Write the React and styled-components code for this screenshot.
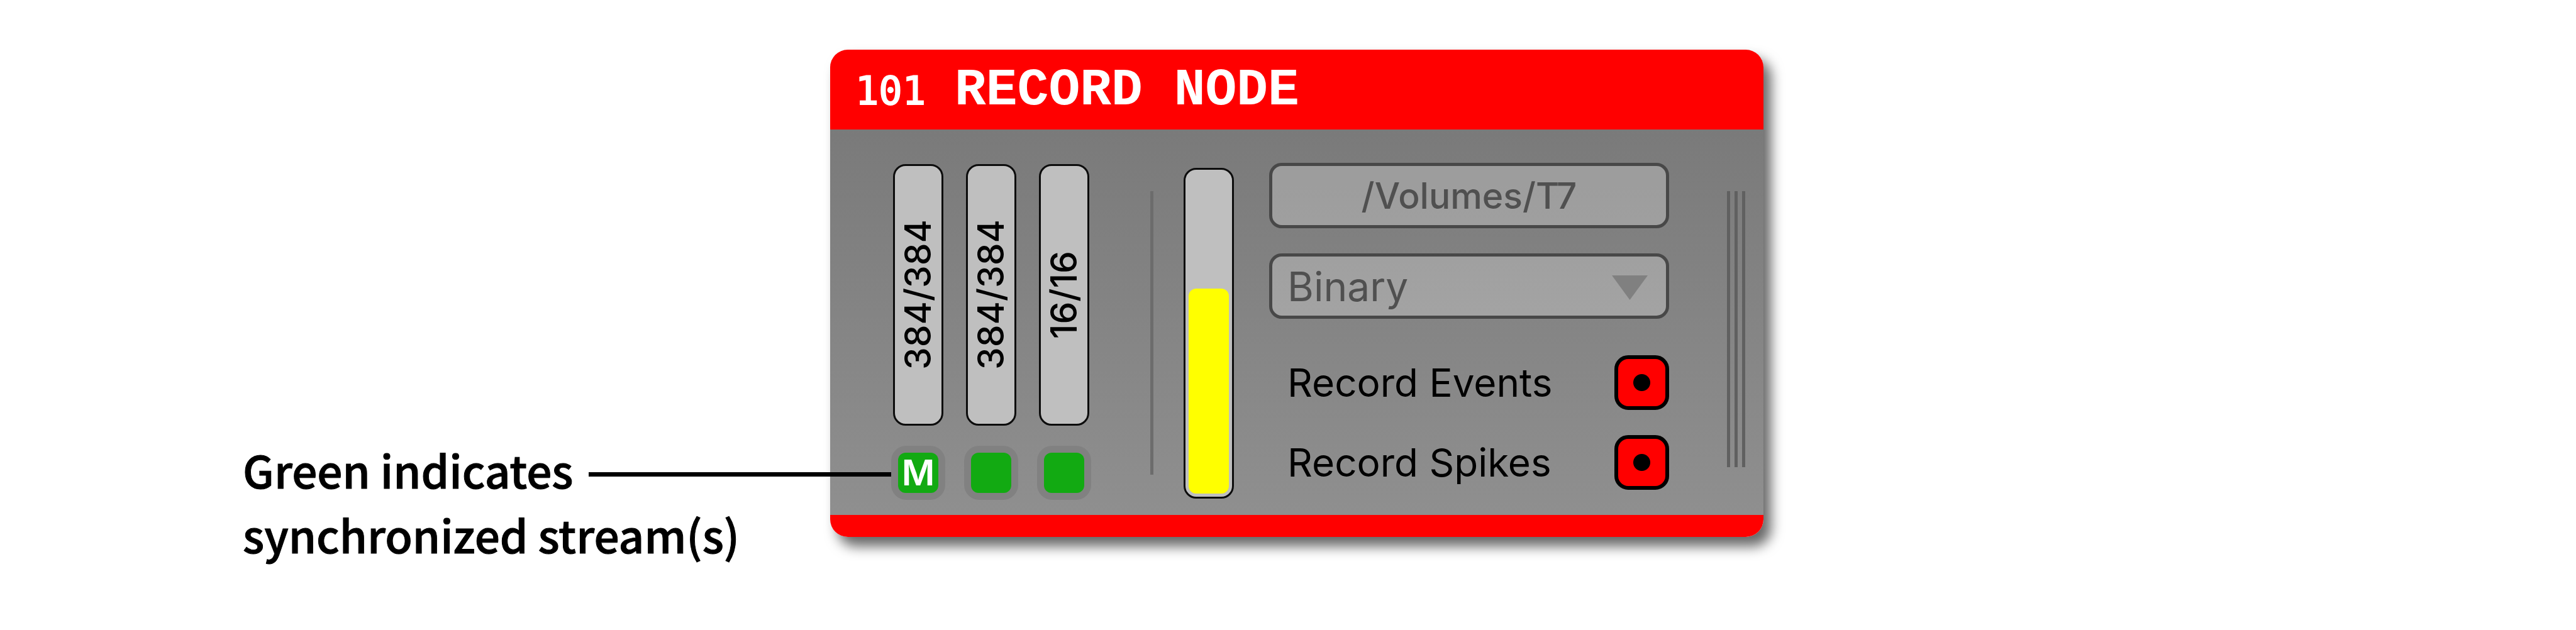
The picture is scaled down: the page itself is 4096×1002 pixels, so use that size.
import React from "react";
import styled, { createGlobalStyle } from "styled-components";

const GlobalStyle = createGlobalStyle`
  * { box-sizing: border-box; }
  body { margin: 0; background: #fff; }
  button, select, input { font: inherit; margin: 0; }
`;

const Page = styled.main`
  display: grid;
  grid-template-columns: minmax(0, 1320fr) 1484px minmax(0, 1292fr);
  align-items: start;
  min-height: 100vh;
  padding-top: 79px;
  font-family: Inter, "Liberation Sans", sans-serif;
  color: #000;
`;

const Note = styled.p`
  justify-self: end;
  align-self: start;
  margin: 616px 144px 0 0;
  font-family: "Noto Sans CJK SC", "Noto Sans", sans-serif;
  font-size: 71px;
  font-weight: 500;
  line-height: 103px;
  white-space: nowrap;
  -webkit-text-stroke: 1px #000;
`;

const Card = styled.section`
  border-radius: 28px;
  box-shadow: 12px 15px 20px rgba(0, 0, 0, 0.6);
`;

const Header = styled.header`
  display: flex;
  align-items: baseline;
  gap: 46px;
  height: 127px;
  padding: 23px 40px 0;
  border-radius: 28px 28px 0 0;
  background: #f00;
  color: #fff;
`;

const NodeId = styled.span`
  font-family: "DejaVu Sans Mono", monospace;
  font-size: 62px;
  line-height: 84px;
  -webkit-text-stroke: 2px #fff;
`;

const Title = styled.h1`
  margin: 0;
  font-family: "Liberation Mono", monospace;
  font-size: 83px;
  font-weight: 700;
  line-height: 84px;
`;

const Body = styled.div`
  display: flex;
  align-items: flex-start;
  padding: 53px 29px 24px 97px;
  background: linear-gradient(#7a7a7a, #8f8f8f);
`;

const Footer = styled.footer`
  height: 35px;
  border-radius: 0 0 28px 28px;
  background: #f00;
`;

const Streams = styled.div`
  display: flex;
  gap: 30px;
  margin-top: 2px;
`;

const Stream = styled.div`
  display: flex;
  flex-direction: column;
  align-items: center;
  gap: 32px;
  width: 86px;
`;

const ChannelButton = styled.button`
  display: flex;
  align-items: center;
  justify-content: center;
  width: 80px;
  height: 416px;
  padding: 0;
  border: 3px solid #0c0c0c;
  border-radius: 20px;
  background: #bfbfbf;
  color: #000;
  font-size: 57px;
  font-weight: 500;
  line-height: 74px;
`;

const Upright = styled.span`
  writing-mode: vertical-rl;
  transform: rotate(180deg);
`;

const SyncCell = styled.div`
  position: relative;
  padding: 11px;
  border-radius: 24px;
  background: #818181;
`;

const SyncButton = styled.button`
  display: flex;
  align-items: center;
  justify-content: center;
  width: 64px;
  height: 64px;
  padding: 0;
  border: 0;
  border-radius: 12px;
  background: #12aa12;
  color: #fff;
  font-size: 57px;
  font-weight: 600;
  line-height: 64px;
`;

const Leader = styled.span`
  position: absolute;
  top: 42px;
  right: 100%;
  width: 481px;
  height: 7px;
  background: #000;
`;

const Divider = styled.div`
  width: 5px;
  height: 451px;
  margin: 45px 48px 0 94px;
  background: #6c6c6c;
`;

const Meter = styled.div`
  display: flex;
  align-items: flex-end;
  width: 80px;
  height: 526px;
  margin-top: 8px;
  padding: 5px;
  border: 3px solid #0c0c0c;
  border-radius: 20px;
  background: #bfbfbf;
`;

const MeterFill = styled.div`
  width: 100%;
  border-radius: 12px;
  background: #ff0;
`;

const Controls = styled.div`
  display: flex;
  flex-direction: column;
  flex: 1;
  gap: 40px;
  margin: 0 92px 0 56px;
`;

const PathButton = styled.button`
  height: 104px;
  padding: 0;
  border: 5px solid #484848;
  border-radius: 20px;
  background: rgba(255, 255, 255, 0.25);
  color: #505050;
  font-size: 57px;
  font-weight: 500;
`;

const FormatField = styled.label`
  position: relative;
  display: block;
  height: 104px;
`;

const FormatSelect = styled.select`
  appearance: none;
  width: 100%;
  height: 100%;
  padding: 0 24px;
  border: 5px solid #484848;
  border-radius: 20px;
  background: rgba(255, 255, 255, 0.25);
  color: #505050;
  font-size: 64px;
`;

const Arrow = styled.svg`
  position: absolute;
  top: 35px;
  right: 34px;
  width: 57px;
  height: 39px;
  pointer-events: none;
`;

const Options = styled.div`
  display: flex;
  flex-direction: column;
  gap: 40px;
  padding: 18px 0 0 29px;
`;

const Option = styled.label`
  display: flex;
  align-items: center;
  justify-content: space-between;
  font-size: 62px;
  line-height: 87px;
  white-space: nowrap;
`;

const Toggle = styled.input`
  appearance: none;
  width: 87px;
  height: 87px;
  border: 6px solid #000;
  border-radius: 22px;
  background: #888;

  &:checked {
    background: radial-gradient(circle, #000 13px, #f00 14px);
  }
`;

const Grip = styled.div`
  display: flex;
  gap: 7px;
  margin-top: 45px;
`;

const GripLine = styled.span`
  width: 5px;
  height: 439px;
  background: #606060;
`;

const streams = [
  { channels: "384/384", main: true },
  { channels: "384/384", main: false },
  { channels: "16/16", main: false },
];

const diskUsed = 326 / 510;

export default function App() {
  return (
    <>
      <GlobalStyle />
      <Page>
        <Note>
          Green indicates
          <br />
          synchronized stream(s)
        </Note>
        <Card>
          <Header>
            <NodeId>101</NodeId>
            <Title>RECORD NODE</Title>
          </Header>
          <Body>
            <Streams>
              {streams.map((stream, i) => (
                <Stream key={i}>
                  <ChannelButton type="button">
                    <Upright>{stream.channels}</Upright>
                  </ChannelButton>
                  <SyncCell>
                    {stream.main && <Leader />}
                    <SyncButton type="button" aria-label={`Stream ${i + 1} synchronized`}>
                      {stream.main ? "M" : null}
                    </SyncButton>
                  </SyncCell>
                </Stream>
              ))}
            </Streams>
            <Divider />
            <Meter
              role="meter"
              aria-label="Disk space"
              aria-valuemin={0}
              aria-valuemax={1}
              aria-valuenow={diskUsed}
            >
              <MeterFill style={{ height: `${diskUsed * 100}%` }} />
            </Meter>
            <Controls>
              <PathButton type="button">/Volumes/T7</PathButton>
              <FormatField>
                <FormatSelect defaultValue="Binary" aria-label="Data format">
                  <option>Binary</option>
                </FormatSelect>
                <Arrow viewBox="0 0 57 39" aria-hidden="true">
                  <path d="M0 0H57L28.5 39Z" fill="#808080" />
                </Arrow>
              </FormatField>
              <Options>
                <Option>
                  Record Events
                  <Toggle type="checkbox" defaultChecked />
                </Option>
                <Option>
                  Record Spikes
                  <Toggle type="checkbox" defaultChecked />
                </Option>
              </Options>
            </Controls>
            <Grip>
              <GripLine />
              <GripLine />
              <GripLine />
            </Grip>
          </Body>
          <Footer />
        </Card>
      </Page>
    </>
  );
}
